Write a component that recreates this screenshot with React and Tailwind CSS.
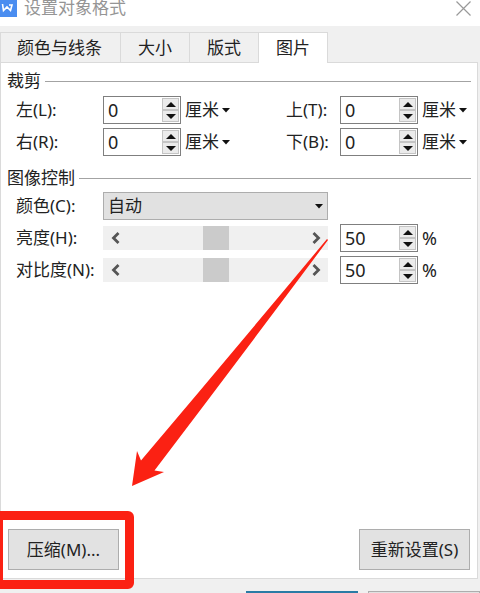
import React, { useState } from 'react';

const FONT = "font-['Noto_Sans','Noto_Sans_CJK_SC',sans-serif]";
const TABS = ['颜色与线条', '大小', '版式', '图片'];

const Caret = ({ className }) => (
    <svg viewBox="0 0 8 5" className={`pointer-events-none absolute w-2 ${className}`} aria-hidden="true"><path d="M0 0h8L4 4.5z" fill="#111"/></svg>
);

const Spinner = ({ id, label, value, onChange }) => {
    const step = (d) => onChange(String((Number(value) || 0) + d));
    const btn = 'flex flex-1 items-center justify-center bg-[#ebebeb] border border-[#c4c4c4]';
    return (
        <div className="flex h-7 w-[78px] shrink-0 border border-[#7f7f7f] bg-white p-px">
            <input id={id} aria-label={label} className="min-w-0 flex-1 bg-transparent pl-[3px] text-lg leading-6 outline-none" value={value} onChange={e => onChange(e.target.value)}/>
            <div className="flex w-[17px] flex-col">
                <button type="button" aria-label="增加" className={btn} onClick={() => step(1)}>
                    <svg viewBox="0 0 10 5" className="w-2.5"><path d="M5 0l5 5H0z" fill="#111"/></svg>
                </button>
                <button type="button" aria-label="减少" className={btn} onClick={() => step(-1)}>
                    <svg viewBox="0 0 10 5" className="w-2.5"><path d="M0 0h10L5 5z" fill="#111"/></svg>
                </button>
            </div>
        </div>
    );
};

// Поле с единицей измерения
const CropField = ({ id, label }) => {
    const [value, setValue] = useState('0');
    return (
        <>
            <label htmlFor={id}>{label}</label>
            <div className="flex items-center gap-1">
                <Spinner id={id} value={value} onChange={setValue}/>
                <div className="relative">
                    <select aria-label={`${label} 单位`} className="block w-[45px] appearance-none bg-transparent outline-none">
                        <option>厘米</option>
                        <option>磅</option>
                    </select>
                    <Caret className="right-0 top-1/2 -mt-0.5"/>
                </div>
            </div>
        </>
    );
};

const SliderField = ({ id, label }) => {
    const [value, setValue] = useState('50');
    const move = (d) => setValue(v => String(Math.min(100, Math.max(0, (Number(v) || 0) + d))));
    const btn = 'flex w-6 items-center justify-center';
    return (
        <>
            <label htmlFor={id}>{label}</label>
            <div className="mr-3 flex h-6 bg-[#f0f0f0]">
                <button type="button" aria-label="减小" className={btn} onClick={() => move(-1)}>
                    <svg viewBox="0 0 9 12" className="w-[9px]" fill="none" stroke="#555" strokeWidth="2.8"><path d="M7.5 1l-5 5 5 5"/></svg>
                </button>
                <input id={id} type="range" min="0" max="100" value={Number(value) || 0} onChange={e => setValue(e.target.value)}
                    className="h-6 min-w-0 flex-1 appearance-none bg-transparent outline-none [&::-webkit-slider-thumb]:h-6 [&::-webkit-slider-thumb]:w-[26px] [&::-webkit-slider-thumb]:appearance-none [&::-webkit-slider-thumb]:bg-[#cbcbcb]"/>
                <button type="button" aria-label="增大" className={btn} onClick={() => move(1)}>
                    <svg viewBox="0 0 9 12" className="w-[9px]" fill="none" stroke="#555" strokeWidth="2.8"><path d="M1.5 1l5 5-5 5"/></svg>
                </button>
            </div>
            <div className="flex items-center gap-1">
                <Spinner label={`${label} %`} value={value} onChange={setValue}/>
                <span className="text-lg leading-6">%</span>
            </div>
        </>
    );
};

const GroupTitle = ({ children }) => (
    <div className="flex h-6 items-center gap-1">
        <h2>{children}</h2>
        <div className="h-px flex-1 bg-[#a3a3a3]"/>
    </div>
);

const App = () => {
    const [tab, setTab] = useState('图片');
    const pushBtn = 'h-[41px] w-[111px] border border-[#adadad] bg-[#e2e2e2]';

    return (
        <div className={`${FONT} flex h-screen flex-col overflow-hidden bg-[#f0f0f0] text-[17px] leading-6 text-[#222]`}>
            {/* Title bar */}
            <header className="flex h-[26px] shrink-0 items-start justify-between bg-white">
                <div className="flex items-start gap-[7px]">
                    <svg viewBox="0 0 17 17" className="h-[17px] w-[17px]" aria-hidden="true">
                        <path d="M0 0h17v17H0z" fill="#4a8df0"/>
                        <path d="M2.5 4l1 6.5L7 7l3.5 3.5L12 5H9" fill="none" stroke="#fff" strokeWidth="1.6"/>
                    </svg>
                    <h1 className="leading-4 text-[#959595]">设置对象格式</h1>
                </div>
                <button type="button" aria-label="关闭" className="mr-2 p-px">
                    <svg viewBox="0 0 15 15" className="h-[15px] w-[15px]" stroke="#999" strokeWidth="1.2"><path d="M0.5 0.5l14 14M14.5 0.5l-14 14"/></svg>
                </button>
            </header>

            {/* Tabs */}
            <div role="tablist" className="flex h-9 shrink-0 items-stretch pt-1.5">
                {TABS.map(t => (
                    <button key={t} type="button" role="tab" aria-selected={tab === t} onClick={() => setTab(t)}
                        className={`relative -mb-px border-t border-r border-[#dadada] px-[17px] first:border-l first:pr-[18px] first:pl-4 ${tab === t ? 'z-10 bg-white' : 'border-b'}`}>
                        {t}
                    </button>
                ))}
            </div>

            {/* Panel */}
            <main className="relative mr-0.5 flex flex-1 flex-col border border-[#dadada] bg-white pt-1.5 pr-1.5 pl-1.5">
                <section>
                    <GroupTitle>裁剪</GroupTitle>
                    <div className="mt-[3px] ml-[9px] grid grid-cols-[87px_1fr_54px_131px] items-center gap-y-1">
                        <CropField id="left" label="左(L):"/>
                        <CropField id="top" label="上(T):"/>
                        <CropField id="right" label="右(R):"/>
                        <CropField id="bottom" label="下(B):"/>
                    </div>
                </section>

                <section className="mt-2.5">
                    <GroupTitle>图像控制</GroupTitle>
                    <div className="mt-0.5 ml-[9px] grid grid-cols-[87px_1fr_131px] items-center gap-y-1">
                        <label htmlFor="color">颜色(C):</label>
                        <div className="relative mr-3">
                            <select id="color" className="block h-7 w-full appearance-none border border-[#adadad] bg-[#e1e1e1] pl-1 outline-none">
                                <option>自动</option>
                                <option>灰度</option>
                                <option>黑白</option>
                                <option>冲蚀</option>
                            </select>
                            <Caret className="right-[5px] top-1/2 -mt-0.5"/>
                        </div>
                        <span/>
                        <SliderField id="brightness" label="亮度(H):"/>
                        <SliderField id="contrast" label="对比度(N):"/>
                    </div>
                </section>

                <div className="mt-auto mb-2 flex justify-between px-px">
                    <div className="relative">
                        <button type="button" className={pushBtn}>压缩(M)...</button>
                        {/* Highlight frame and pointer */}
                        <div className="pointer-events-none absolute -top-[18px] -right-[15px] -bottom-[19px] -left-3.5 rounded-md border-[9px] border-[#fb2113]"/>
                        <svg viewBox="0 0 200 250" className="pointer-events-none absolute bottom-[83px] left-[123px] h-[250px] w-[200px]" aria-hidden="true">
                            <path d="M1 249L6 214L10 223.5Q101 116 196 2L197 3Q112 117 23.500 233.500L33 235z" fill="#fb2113"/>
                        </svg>
                    </div>
                    <button type="button" className={pushBtn}>重新设置(S)</button>
                </div>
            </main>

            {/* Footer */}
            <footer className="flex h-3.5 shrink-0 items-start justify-end gap-2.5 pt-3">
                <button type="button" aria-label="确定" className="h-8 w-28 border-2 border-[#2a7ba5] bg-[#e1e1e1]"/>
                <button type="button" aria-label="取消" className="h-8 w-28 border border-[#adadad] bg-[#e1e1e1]"/>
            </footer>
        </div>
    );
};

export default App;
